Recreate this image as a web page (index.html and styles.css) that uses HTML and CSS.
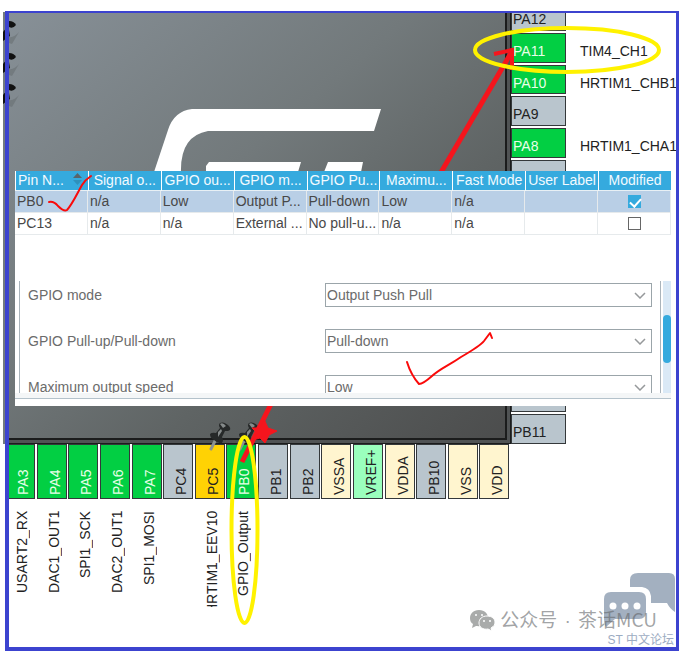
FILE: index.html
```html
<!DOCTYPE html>
<html lang="zh-CN">
<head>
<meta charset="utf-8">
<title>GPIO Pinout</title>
<link rel="stylesheet" href="styles.css">
</head>
<body>
<main class="frame">
  <section class="board">
    <div class="chip"></div>
    <ul class="side">
      <li><span class="pin">PA12</span></li>
      <li><span class="pin green">PA11</span><span class="func">TIM4_CH1</span></li>
      <li><span class="pin green">PA10</span><span class="func">HRTIM1_CHB1</span></li>
      <li><span class="pin">PA9</span></li>
      <li><span class="pin green">PA8</span><span class="func">HRTIM1_CHA1</span></li>
      <li><span class="pin"></span></li>
      <li><span class="pin"></span></li>
      <li><span class="pin"></span></li>
      <li><span class="pin"></span></li>
      <li><span class="pin"></span></li>
      <li><span class="pin"></span></li>
      <li><span class="pin"></span></li>
      <li><span class="pin"></span></li>
      <li><span class="pin">PB11</span></li>
    </ul>
    <ul class="bottom">
      <li><span class="pin green">PA3</span><span class="func">USART2_RX</span></li>
      <li><span class="pin green">PA4</span><span class="func">DAC1_OUT1</span></li>
      <li><span class="pin green">PA5</span><span class="func">SPI1_SCK</span></li>
      <li><span class="pin green">PA6</span><span class="func">DAC2_OUT1</span></li>
      <li><span class="pin green">PA7</span><span class="func">SPI1_MOSI</span></li>
      <li><span class="pin">PC4</span></li>
      <li><span class="pin gold">PC5</span><span class="func">HRTIM1_EEV10</span></li>
      <li><span class="pin green">PB0</span><span class="func">GPIO_Output</span></li>
      <li><span class="pin">PB1</span></li>
      <li><span class="pin">PB2</span></li>
      <li><span class="pin cream">VSSA</span></li>
      <li><span class="pin mint">VREF+</span></li>
      <li><span class="pin cream">VDDA</span></li>
      <li><span class="pin">PB10</span></li>
      <li><span class="pin cream">VSS</span></li>
      <li><span class="pin cream">VDD</span></li>
    </ul>
  </section>

  <svg class="layer" width="683" height="653" viewBox="0 0 683 653" aria-hidden="true">
    <defs>
      <g id="tack">
        <path d="M5 19L1 27" stroke="#8d9391" stroke-width="3" stroke-linecap="round"/>
        <path d="M0 12Q2 10 6 11L10 6Q8 3 10 1Q14 -1 19 4Q22 8 18 9L15 9L12 15Q14 18 12 21Q8 22 4 18Q0 16 0 12Z" fill="#262929"/>
        <path d="M10 2Q13 0 16 4L13 6Z M8 10L11 7L12 9L8 15Z" fill="#858a8a"/>
      </g>
      <g id="stub">
        <path d="M9 14Q14 15 19 9L12 21L9 20Z" fill="#697073" opacity=".6"/>
        <path d="M9 -2Q14 -2 16 2Q13 6 9 4Z" fill="#111"/>
        <path d="M9 7L10 13L3 18L3 9Q5 5 9 7Z" fill="#111"/>
      </g>
    </defs>
    <path d="M3 12H5V444H3Z" fill="#737a7e"/>
    <path d="M154 172L168 130Q174 111 192 109H381L374 131H208Q180 136 181 172Z M206 172V166L209 162H301L298 172Z M324 172L328 162H363L361 172Z" fill="#fff"/>
    <use href="#stub" y="23"/><use href="#stub" y="55"/><use href="#stub" y="86"/>
    <path d="M5 12H9V644H5Z" fill="#3c43cf"/>
    <use href="#tack" x="210" y="422"/><use href="#tack" x="239" y="422"/>
    <g fill="none" stroke="#f5151d" stroke-width="5">
      <path d="M242 462L272 402M440 174L511 53"/>
      <path d="M494 54L512 50V70" stroke-width="4"/>
    </g>
    <path d="M264 419L268 428L277 431L269 435L265 443L260 438L253 440L257 433L252 428L260 428Z" fill="#f5151d" stroke="#f5151d" stroke-linejoin="round"/>
  </svg>

  <section class="dialog">
    <table class="pins">
      <thead>
        <tr><th class="sorted">Pin N...<svg width="9" height="12" viewBox="0 0 9 12" aria-hidden="true"><path d="M0 5L4.500 0L9 5Z" fill="#58656c"/><path d="M0 7L4.500 12L9 7Z" fill="#2e91bd"/></svg></th><th>Signal o...</th><th>GPIO ou...</th><th>GPIO m...</th><th>GPIO Pu...</th><th>Maximu...</th><th>Fast Mode</th><th>User Label</th><th>Modified</th></tr>
      </thead>
      <tbody>
        <tr class="selected"><td>PB0</td><td>n/a</td><td>Low</td><td>Output P...</td><td>Pull-down</td><td>Low</td><td>n/a</td><td></td><td class="tick"><input type="checkbox" aria-label="PB0 modified" checked></td></tr>
        <tr><td>PC13</td><td>n/a</td><td>n/a</td><td>External ...</td><td>No pull-u...</td><td>n/a</td><td>n/a</td><td></td><td class="tick"><input type="checkbox" aria-label="PC13 modified"></td></tr>
      </tbody>
    </table>
    <div class="settings">
      <form class="form">
        <div class="row"><label for="mode">GPIO mode</label><div class="pick"><select id="mode"><option>Output Push Pull</option></select><svg width="12" height="7" viewBox="0 0 12 7" aria-hidden="true"><path d="M1 1L6 6L11 1"/></svg></div></div>
        <div class="row"><label for="pull">GPIO Pull-up/Pull-down</label><div class="pick"><select id="pull"><option>Pull-down</option></select><svg width="12" height="7" viewBox="0 0 12 7" aria-hidden="true"><path d="M1 1L6 6L11 1"/></svg></div></div>
        <div class="row"><label for="speed">Maximum output speed</label><div class="pick"><select id="speed"><option>Low</option></select><svg width="12" height="7" viewBox="0 0 12 7" aria-hidden="true"><path d="M1 1L6 6L11 1"/></svg></div></div>
      </form>
      <div class="track"><div class="thumb"></div></div>
    </div>
    <div class="edge"></div>
  </section>

  <footer class="credit">
    <div class="account">
      <svg width="27" height="22" viewBox="0 0 27 22" aria-hidden="true">
        <path d="M10 1C4 1 1 5 1 9c0 3 1 5 3 6l-1 4 4-2c8 1 12-3 12-8 0-4-3-8-9-8Z" fill="#a9abaa"/>
        <path d="M18 7c-5 0-8 3-8 7s4 7 9 6l4 2-1-3c3-2 4-3 4-6s-3-6-8-6Z" fill="#a9abaa" stroke="#fff"/>
        <g fill="#fff"><circle cx="7" cy="6" r="1"/><circle cx="13" cy="6" r="1"/><circle cx="15" cy="12" r="1"/><circle cx="21" cy="12" r="1"/></g>
      </svg>
      <span>公众号 <span class="dot">·</span> 茶话MCU</span>
    </div>
    <div class="forum">ST 中文论坛</div>
    <svg class="bubbles" width="72" height="56" viewBox="0 0 72 56" aria-hidden="true">
      <path d="M34 1H65Q71 1 71 7V40Q66 37 63 31H47V24Q46 16 38 15H26V8Q26 1 34 1Z" fill="#a3b0c0"/>
      <path d="M7 20H35Q42 20 42 27V40Q42 47 35 47H11L2 55Q0 52 0 47V27Q0 20 7 20Z" fill="#a3b0c0"/>
      <g fill="#fff"><circle cx="9" cy="34" r="3.500"/><circle cx="21" cy="34" r="3.500"/><circle cx="33" cy="34" r="3.500"/></g>
    </svg>
  </footer>

  <svg class="layer" width="683" height="653" viewBox="0 0 683 653" aria-hidden="true">
    <g fill="none" stroke="#fff200" stroke-width="4">
      <ellipse cx="567" cy="50" rx="92" ry="22"/>
      <ellipse cx="244.500" cy="530" rx="13" ry="93"/>
    </g>
    <g fill="none" stroke="#fa0a0a" stroke-width="2" stroke-linecap="round" stroke-linejoin="round">
      <path d="M49 202Q54 201 58 206Q64 212 67 210C72 205 78 192 82 185Q85 180 91 176"/>
      <path d="M407 362Q411 375 419 384Q423 384 432 376C441 368 448 366 461 357Q480 346 484 341L490 333L492 338"/>
    </g>
  </svg>
</main>
</body>
</html>
```
FILE: styles.css
```css
* { box-sizing: border-box; }

body {
  margin: 0;
  background: #fff;
  color: #222;
  font: 14px/20px "Liberation Sans", "Noto Sans CJK SC", sans-serif;
}

ul { margin: 0; padding: 0; list-style: none; }

.frame {
  position: relative;
  display: flex;
  flex-direction: column;
  min-height: calc(100vh - 16px);
  margin: 11px 4px 5px 5px;
  border: solid #3c43cf;
  border-width: 2px 3px 4px 4px;
}

.layer {
  position: absolute;
  top: -13px;
  left: -9px;
  pointer-events: none;
}

/* Chip body with its pins */
.board {
  display: grid;
  grid-template-columns: minmax(0, 1fr) 165px;
  grid-template-rows: 431px auto;
  overflow: hidden;
}

.chip {
  border: solid #1b1c1c;
  border-width: 0 1px 1px 0;
  background: linear-gradient(140deg, #879097 0%, #72797b 40%, #5f6464 65%, #4b4c4c 100%);
  box-shadow: inset -3px -3px 0 #505354, inset -5px -5px 0 #1b1c1c;
}

.pin {
  border: 1px solid #34383a;
  background: #b9c5cd;
}

.green { background: #02cf43; color: #e8ffe8; }
.gold { background: #ffd204; }
.cream { background: #fff5cf; }
.mint { background: #9affbd; }

.side {
  display: grid;
  grid-auto-rows: 1fr;
  row-gap: 2px;
  margin-top: -12px;
}

.side li { display: flex; align-items: stretch; min-height: 0; }
.side .pin { flex: none; width: 55px; padding: 7px 0 0 1px; line-height: 20px; }
.side .func { padding: 8px 0 0 14px; line-height: 20px; }

.bottom {
  display: grid;
  grid-auto-flow: column;
  grid-auto-columns: minmax(0, 1fr);
  column-gap: 2px;
  margin: 0 2px 0 -4px;
}

.bottom .pin,
.bottom .func {
  display: flex;
  align-items: center;
  padding-right: 6px;
  writing-mode: vertical-rl;
  transform: rotate(180deg);
  white-space: nowrap;
  line-height: 22px;
}

.bottom .pin { height: 55px; padding-top: 3px; }
.bottom .func { justify-content: flex-end; height: 96px; margin-top: 12px; overflow: hidden; }

/* Pin configuration panel lying over the chip */
.dialog {
  position: absolute;
  top: 158px;
  left: 6px;
  right: 5px;
  padding-bottom: 7px;
  background: #fff;
  color: #484848;
}

.pins {
  width: 100%;
  table-layout: fixed;
  border-collapse: separate;
  border-spacing: 0;
}

.pins th,
.pins td {
  padding: 0 0 0 2px;
  overflow: hidden;
  white-space: nowrap;
  text-align: left;
  font-weight: 400;
}

.pins th {
  height: 20px;
  padding: 0;
  border-left: 1px solid #fff;
  border-bottom: 1px solid #e8f0f5;
  background: #35aade;
  color: #f2faff;
  text-align: center;
  line-height: 19px;
}

.pins .sorted { padding-left: 2px; text-align: left; }
.pins .sorted svg { margin-left: 9px; vertical-align: 0; }

.pins td {
  height: 22px;
  border: solid #e6eaec;
  border-width: 0 1px 1px 0;
  line-height: 21px;
}

.selected td { background: #b9cfe6; }
.pins .tick { padding: 0; text-align: center; }

.tick input {
  appearance: none;
  display: block;
  position: relative;
  width: 13px;
  height: 13px;
  margin: 0 auto;
  border: 1px solid #666;
  background: #fff;
}

.tick input:checked { border-color: #35aade; background: #35aade; }

.tick input:checked::after {
  content: "";
  position: absolute;
  top: 0;
  left: 3px;
  width: 5px;
  height: 9px;
  border: solid #fff;
  border-width: 0 2px 2px 0;
  transform: rotate(42deg);
}

.settings {
  display: flex;
  justify-content: space-between;
  height: 112px;
  margin: 46px 0 0 4px;
  overflow: hidden;
  border-left: 1px solid #aab4bb;
}

.form {
  flex: 1;
  display: flex;
  flex-direction: column;
  gap: 22px;
  padding: 2px 8px 0;
  border-right: 1px solid #aab4bb;
}

.row {
  flex: none;
  display: grid;
  grid-template-columns: 297px minmax(0, 1fr);
  align-items: center;
  color: #6b6b6b;
}

.pick { position: relative; }

.pick select {
  appearance: none;
  display: block;
  width: 100%;
  height: 24px;
  padding: 0 1px;
  border: 1px solid #9ba5aa;
  border-radius: 0;
  background: #fff;
  color: #6b6b6b;
  font: inherit;
}

.pick svg {
  position: absolute;
  top: 9px;
  right: 6px;
  fill: none;
  stroke: #96999b;
  stroke-width: 1.500;
}

.track { width: 8px; margin-left: 2px; padding-top: 34px; background: #dae9f6; }
.thumb { height: 48px; border-radius: 4px; background: #35aade; }
.edge { height: 6px; border-bottom: 1px solid #b4c2cb; background: #f4f6f7; }

/* Watermarks */
.credit {
  position: relative;
  display: flex;
  flex-direction: column;
  align-items: flex-end;
  margin-top: auto;
}

.account {
  display: flex;
  align-items: center;
  gap: 4px;
  margin-right: 19px;
  color: rgba(100, 103, 106, 0.6);
  font: 19px/24px "Noto Sans CJK SC", sans-serif;
}

.dot { margin: 0 3px; font-family: "Liberation Sans", sans-serif; }

.forum {
  margin-right: 2px;
  color: #9dacc2;
  font-size: 12px;
  line-height: 14px;
}

.bubbles {
  position: absolute;
  right: 0;
  bottom: 19px;
  z-index: -1;
}
```
